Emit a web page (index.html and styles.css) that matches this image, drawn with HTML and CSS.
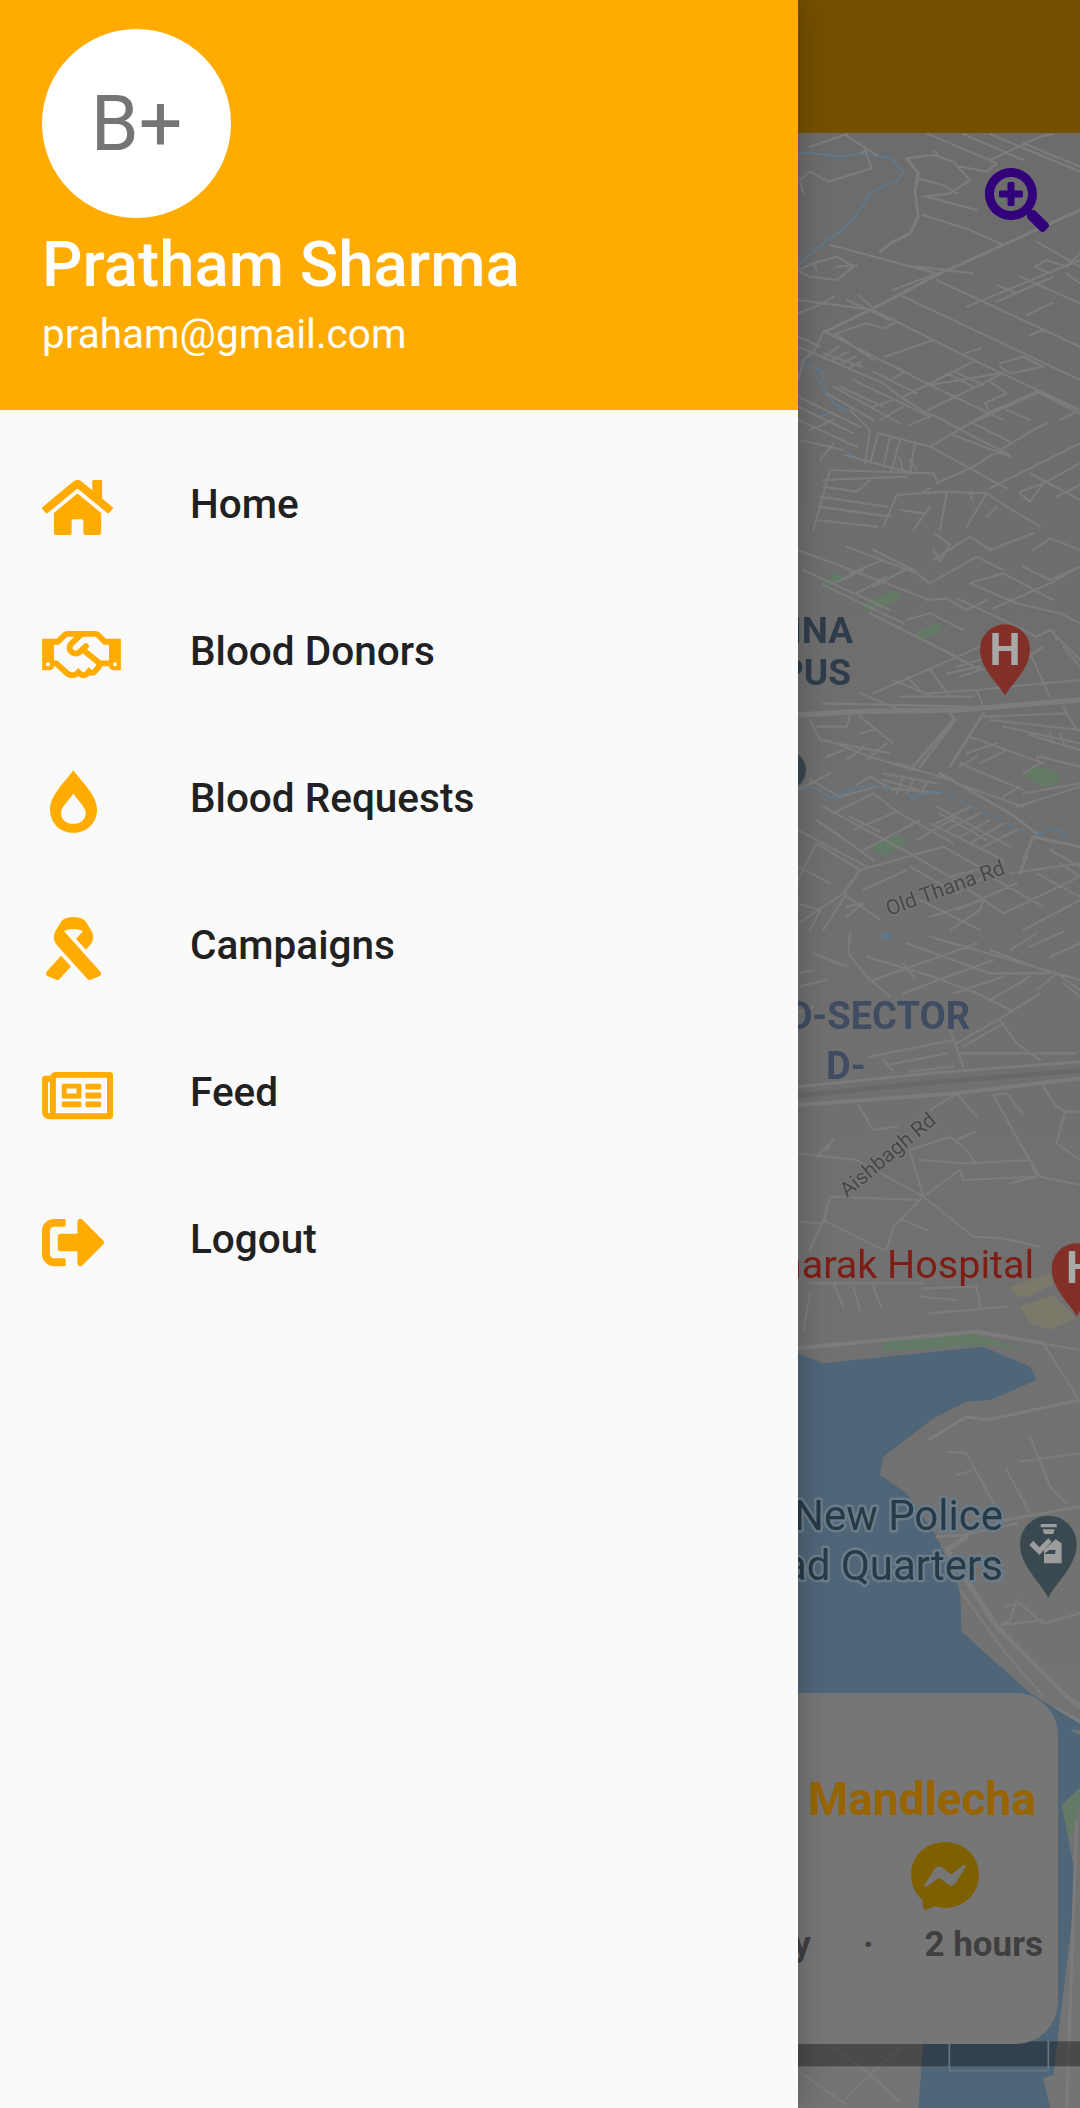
FILE: index.html
```html
<!DOCTYPE html>
<html lang="en">
<head>
<meta charset="utf-8">
<title>Blood Donors</title>
<link rel="stylesheet" href="styles.css">
</head>
<body>
<div class="screen">
  <main class="app">
    <div class="appbar"></div>
    <div class="map">
      <svg class="map-canvas" viewBox="0 133 1080 1975" aria-hidden="true">
        <!-- land under the lake and the lake -->
        <g transform="translate(790 1330) scale(.33333)">
          <path class="water" d="M24 70L100 100L580 50L720 110L740 150L600 210L530 215L430 265L280 380L270 435L350 490L440 620L510 780L515 905L720 1090L900 1200L24 1200Z"/>
          <path class="park" d="M275 30L540 10L710 60L590 45L280 65Z"/>
          <path class="road wide" d="M24 55L280 30L560 5L760 40"/>
          <path class="road mid" d="M415 330L530 260L590 270L870 210M620 575L870 530M440 620L520 615L680 580"/>
          <path class="road" d="M760 40L870 215M760 40L870 60M470 365L530 370L610 520M500 435L550 420M650 420L720 550M720 320L780 470L830 520M690 395L870 370M650 830L690 820L760 880L870 850M680 810L660 870L630 885L760 870"/>
          <path class="road xwide" d="M470 660L530 620M470 660L620 890L830 1100L870 1130"/>
          <path class="road" d="M510 780L640 960L760 1100"/>
        </g>
        <g transform="translate(790 1708) scale(.33333)">
          <path class="water" d="M800 50L870 80L870 240L815 290L860 520L790 1100L760 1110L780 1200L385 1200L400 1000L24 1000L24 0L800 0Z"/>
          <path class="park" d="M815 290L870 240L870 262L850 380L835 380Z"/>
          <path class="road mid" d="M860 340L830 1200M800 0L870 40"/>
          <path class="road" d="M25 1090L170 1190M120 1010L240 1100L340 1010M240 1100L330 1180M240 1100L170 1170"/>
          <rect class="band" x="24" y="1000" width="850" height="75"/>
          <path class="box" d="M478 1000V1088H775V1000"/>
        </g>
        <!-- north -->
        <g transform="translate(790 130) scale(.33333)">
          <path class="river" d="M24 70L60 68L150 80L215 70L305 85L340 125L325 150L235 190L230 215L165 295L100 340L24 405M45 705L90 720L105 735L90 755L110 790L130 820L170 840M85 860L120 850M100 880L130 870M170 965L210 990"/>
          <path class="park" d="M620 205L645 205L640 218L620 215Z"/>
          <path class="road" d="M60 50L170 12M170 18L260 75M225 60L245 115L115 155L60 125L30 150L40 190M215 70L225 60M350 85L430 75L490 95L540 150L480 190L400 200M380 145L460 165L500 190M430 60L445 75M410 10L620 100M520 12L700 90M600 12L870 125M700 40L870 110M600 90L750 20L790 12M510 110L590 125L620 100M410 200L560 240M400 255L540 300L640 345M120 345L440 430M25 420L70 400L140 380L190 410L140 450L60 440L30 425M70 400L80 420M140 410L200 405M380 410L550 430M310 480L440 430M330 495L870 750M440 450L870 650M250 540L550 690L870 840M105 605L420 765L640 870M740 335L870 410M735 410L770 390L830 410L870 370M735 410L780 430M830 430L870 460M690 440L870 520M620 465L680 490M530 530L870 390M620 515L790 440M710 555L785 520M720 615L760 600M170 510L300 570M205 495L250 535M25 510L100 520L130 500M25 550L100 520M100 520L250 540M135 610L250 690M140 610L230 580L280 595L320 575M285 680L430 630M525 670L575 655M450 745L560 690M420 765L630 730M470 730L550 770M495 725L580 765M630 700L700 680L760 710L660 730L630 710M25 620L90 650M25 650L280 760L330 800L420 855M100 605L75 660L40 690L25 750M100 670L215 710M105 680L145 650M130 690L175 665M155 700L195 680M180 710L215 695M250 725L380 790M305 705L345 725L310 745M340 800L450 745M415 840L640 730M585 820L600 845L740 785L870 850M585 820L650 790L600 755M600 845L540 880M360 885L430 855M430 855L570 930L660 975M420 950L540 880L750 785M650 840L720 870M730 900L770 880M810 870L870 840M540 875L660 935M130 770L330 880M150 770L280 830M190 750L420 860M110 790L250 870M250 830L310 810M270 870L340 830M180 840L240 900L225 1000M25 800L210 890M25 830L190 910M25 870L200 950M60 900L130 870M30 930L160 960M130 940L90 990M265 910L240 1000M300 920L280 1010M330 930L305 1020M375 935L360 1030M265 910L420 950M165 975L370 1030M330 985L340 1030M360 990L380 1020M420 950L540 1015L650 1075M540 1015L440 1060M540 1015L730 900M490 915L660 980M600 1075L830 960L870 940M720 1030L870 1110M690 1085L760 1060L720 1115L690 1090M760 1060L870 1000M800 1100L870 1065M120 1020L430 1030M430 1030L440 1050M120 1020L70 1200M100 1050L350 1040M100 1070L200 1085L240 1050M90 1100L290 1130M85 1130L300 1160M80 1170L260 1190M280 1190L320 1095L470 1085M330 1140L400 1150M400 1085L420 1075M470 1090L450 1200M370 1200L420 1130M470 1085L590 1090L650 1130L750 1190M590 1090L530 1190M540 1090L550 1115M590 1160L620 1130"/>
          <path class="road mid" d="M350 85L385 130L375 180L385 260L360 310L310 335L270 365M105 605L250 535L450 430L640 345L760 290L870 240"/>
        </g>
        <!-- middle with the hospital pin -->
        <g transform="translate(790 530) scale(.33333)">
          <path class="park" d="M95 155L150 130L168 145L110 170ZM212 228L310 180L338 200L240 248ZM365 315L440 278L465 295L392 332ZM232 950L315 910L355 935L280 980ZM700 738L740 708L805 725L805 760L765 772Z"/>
          <path class="road" d="M25 60L130 100L420 210M100 165L340 280M40 120L300 240M170 50L380 130L420 160M250 60L380 125M280 90L180 130M220 120L130 160M290 140L200 190M345 120L250 170M430 90L540 20L600 60L730 10M420 160L560 80L640 120M430 60L450 95L480 45L435 10M540 160L680 220L810 250L870 280M540 160L640 130L790 210M610 235L780 160L870 110M730 60L780 25L870 60M700 110L780 150L870 110M500 205L640 270L740 320M410 210L470 205L530 240L590 210M350 270L420 250L520 300M240 250L500 380M400 330L570 420M250 490L480 390L570 350M210 490L330 540M310 450L430 500M420 420L480 500M350 440L390 480M470 430L570 410M500 410L600 380M510 440L600 410M410 490L560 480L760 460L870 450M560 480L580 530M330 500L550 500M100 520L540 530M740 320L780 300L870 390M790 300L800 330M720 370L780 500M820 350L870 410M760 350L700 390M820 530L860 600M580 560L830 550M600 570L870 600M640 590L870 640M780 610L790 640M810 610L820 640M720 615L870 660M60 570L90 630L300 670M80 590L170 590L180 560M210 560L310 640M250 600L210 610M110 630L240 680L370 720M160 660L110 680M220 650L170 690M290 640L230 690M320 700L480 750M540 620L760 700M620 640L530 670M510 700L700 780M560 680L510 710M650 660L570 700M740 680L750 700L700 730M750 680L870 710M500 760L700 830M640 800L690 770M700 790L870 760M680 830L870 770M24 780L120 730M60 750L150 800L260 770L450 790M200 765L240 740L310 780M280 730L440 760M280 750L420 790M340 740L320 790M370 750L350 790M410 760L390 790M100 830L340 960L480 1040L640 1150M80 870L250 990M24 900L230 1010M190 900L320 845L490 940M130 850L250 790L320 845M180 860L270 905M220 960L390 870M380 930L500 860M440 830L660 950M420 880L640 990M450 850L590 930M540 830L440 880M570 850L470 900M600 870L510 920M640 880L540 940M680 900L580 950M24 1050L80 940L210 1020L160 1090L24 1180M24 1010L120 1060M160 1090L270 1170M210 1020L460 950L600 1030L500 1090L360 1010M350 1020L220 1080M390 1110L570 1200M480 1040L640 1000M660 1030L870 1000M600 1040L760 1130M740 1030L870 1100M780 960L870 1010M810 1000L870 1040M500 1140L680 1060M640 1150L870 1040M700 1200L870 1110M20 1120L90 1140L60 1200M100 1200L170 1090M170 1130L220 1120L170 1160M420 1160L580 1110L570 1140L480 1200"/>
          <path class="road mid" d="M480 550L495 570L390 710M580 550L480 710M490 570L360 720M450 730L660 850L740 910M700 990L730 920L870 950M690 1030L710 980"/>
          <path class="road xwide" d="M24 555L200 545L500 540L870 510"/>
          <path class="river" d="M24 772L80 775L125 805L190 775L240 765L300 775M360 800L455 785"/>
          <path class="river dashed" d="M480 795L720 915"/>
          <path class="river" d="M740 915L790 895L830 915"/>
          <path class="pin-red" d="M645 497C630 465 570 420 570 358A75 75 0 0 1 720 358C720 420 660 465 645 497Z"/>
          <circle class="pin-dark" cx="-10" cy="720" r="58"/>
        </g>
        <!-- south of the rail line -->
        <g transform="translate(790 930) scale(.33333)">
          <path class="sand" d="M660 1070L780 1030L790 1060L720 1100L680 1100ZM690 1130L790 1095L860 1165L780 1200L720 1180Z"/>
          <rect class="river-fill" x="276" y="8" width="24" height="18"/>
          <path class="road" d="M180 10L175 70L230 140L300 200M230 80L430 140L560 190L660 240M70 70L170 110M350 40L600 130L780 130M420 20L870 150M600 60L760 120M660 60L740 10M720 50L820 5M780 80L870 40M740 180L800 130L870 180M820 160L870 200M250 150L560 40M340 190L500 130L610 90M340 100L370 140M490 190L640 140M600 210L720 140M500 340L640 260L750 190M630 270L680 340L750 390M640 280L520 350M500 370L860 370M24 130L70 120M24 170L110 150M24 250L70 230M480 300L520 410M240 380L490 330M290 405L470 370M360 425L490 410M280 390L310 425M420 540L500 490L560 560M205 525L250 600L320 590M610 495L690 640L750 740L870 765M610 495L650 490L700 555M800 530L825 545L800 640L870 690M825 545L870 545M760 470L800 530M360 665L400 800M360 660L480 620L530 660L555 700M500 630L555 605M390 690L530 700L720 690M720 690L740 740L520 750L510 720M660 760L740 740M400 800L510 720M24 670L200 690L400 800L550 920M80 680L130 630L110 660M100 880L120 800L380 810M60 960L100 870L280 960M400 800L310 890L290 960M340 870L410 900M24 875L100 880M550 920L640 925L750 950M130 1060L160 1130M190 1070L210 1140M250 1070L275 1135M400 1075L560 1070L570 1130M390 1100L500 1110M420 1150L650 1130M40 1200L60 1090M60 1060L400 1060"/>
          <path class="road mid" d="M24 470L420 430L870 395"/>
          <path class="rail" d="M24 497L450 455L870 422"/>
          <path class="road wide" d="M24 525L500 490L870 445"/>
          <path class="pin-red" d="M860 1160C845 1125 785 1080 785 1015A75 75 0 0 1 935 1015C935 1080 875 1125 860 1160Z"/>
        </g>
        <g transform="translate(790 1330) scale(.33333)">
          <path class="pin-dark" d="M775 805C760 765 690 710 690 642A85 85 0 0 1 860 642C860 710 790 765 775 805Z"/>
          <path class="pin-figure" d="M752 582H800V592H752ZM758 598H794L790 612H762ZM797 628L815 640V700H762V672H795L797 660H778L762 672V660ZM718 645L730 632L748 652L775 625L785 635L748 675Z"/>
        </g>
        <text class="label district" x="853" y="643" text-anchor="end">INA</text>
        <text class="label district" x="851" y="685" text-anchor="end">PUS</text>
        <text class="label sector" x="970" y="1029" text-anchor="end">D-SECTOR</text>
        <text class="label sector" x="826" y="1079">D-</text>
        <text class="label pin-letter" x="1005" y="665" text-anchor="middle">H</text>
        <text class="label pin-letter" x="1066" y="1283">H</text>
        <text class="label street" transform="translate(889 916) rotate(-20)">Old Thana Rd</text>
        <text class="label street" transform="translate(847 1198) rotate(-40)">Aishbagh Rd</text>
        <text class="label hospital" x="1034" y="1278" text-anchor="end">Smarak Hospital</text>
        <text class="label police" x="1003" y="1530" text-anchor="end">New Police</text>
        <text class="label police" x="1003" y="1580" text-anchor="end">Head Quarters</text>
      </svg>

      <svg class="zoom-button" viewBox="0 0 512 512" aria-hidden="true"><path d="M304 192v32c0 6.6-5.4 12-12 12h-56v56c0 6.6-5.4 12-12 12h-32c-6.6 0-12-5.4-12-12v-56h-56c-6.6 0-12-5.4-12-12v-32c0-6.6 5.4-12 12-12h56v-56c0-6.6 5.4-12 12-12h32c6.6 0 12 5.4 12 12v56h56c6.6 0 12 5.4 12 12zm201 284.7L476.7 505c-9.4 9.4-24.6 9.4-33.9 0L343 405.3c-4.5-4.5-7-10.6-7-17V372c-35.3 27.6-79.7 44-128 44C93.1 416 0 322.9 0 208S93.1 0 208 0s208 93.1 208 208c0 48.3-16.4 92.7-44 128h16.3c6.4 0 12.5 2.5 17 7l99.7 99.7c9.3 9.4 9.3 24.6 0 34zM344 208c0-75.2-60.8-136-136-136S72 132.8 72 208s60.8 136 136 136 136-60.8 136-136z"/></svg>

      <section class="donor-card">
        <h2 class="donor-name">Mandlecha</h2>
        <svg class="messenger" viewBox="0 0 512 512" aria-hidden="true"><path d="M256.55 8C116.52 8 8 110.34 8 248.57c0 72.3 29.71 134.78 78.07 177.94 8.35 7.51 6.63 11.86 8.05 58.23A19.92 19.92 0 0 0 122 502.31c52.91-23.3 53.59-25.14 62.56-22.7C337.85 521.8 504 423.7 504 248.57 504 110.34 396.59 8 256.55 8zm149.24 185.13l-73 115.57a37.37 37.37 0 0 1-53.91 9.93l-58.08-43.47a15 15 0 0 0-18 0l-78.37 59.44c-10.46 7.93-24.16-4.6-17.11-15.67l73-115.57a37.36 37.36 0 0 1 53.91-9.93l58.06 43.46a15 15 0 0 0 18 0l78.41-59.38c10.44-7.98 24.14 4.54 17.09 15.62z"/></svg>
        <div class="donor-meta">
          <span>y</span>
          <span class="meta-dot">·</span>
          <span>2 hours</span>
        </div>
      </section>
    </div>
  </main>

  <aside class="drawer">
    <header class="drawer-header">
      <div class="avatar">B+</div>
      <div class="user-name">Pratham Sharma</div>
      <div class="user-email">praham@gmail.com</div>
    </header>
    <nav class="menu">
      <a class="menu-row">
        <span class="icon-slot"><svg class="icon icon-home" viewBox="0 0 576 512"><path d="M280.37 148.26L96 300.11V464a16 16 0 0 0 16 16l112.06-.29a16 16 0 0 0 15.92-16V368a16 16 0 0 1 16-16h64a16 16 0 0 1 16 16v95.64a16 16 0 0 0 16 16.05L464 480a16 16 0 0 0 16-16V300L295.67 148.26a12.19 12.19 0 0 0-15.3 0zM571.6 251.47L488 182.56V44.05a12 12 0 0 0-12-12h-56a12 12 0 0 0-12 12v72.61L318.47 43a48 48 0 0 0-61 0L4.34 251.47a12 12 0 0 0-1.6 16.9l25.5 31A12 12 0 0 0 45.15 301l235.22-193.74a12.19 12.19 0 0 1 15.3 0L530.9 301a12 12 0 0 0 16.9-1.6l25.5-31a12 12 0 0 0-1.7-16.93z"/></svg></span>
        <span class="menu-label">Home</span>
      </a>
      <a class="menu-row">
        <span class="icon-slot"><svg class="icon icon-hands" viewBox="0 0 640 512"><path d="M519.2 127.9l-47.6-47.6A56.252 56.252 0 0 0 432 64H205.2c-14.8 0-29.1 5.9-39.6 16.3L118 127.9H0v255.7h64c17.6 0 31.8-14.2 31.9-31.7h9.1l84.6 76.4c30.9 25.1 73.8 25.7 105.6 3.8 12.5 10.8 26 15.9 41.1 15.9 18.2 0 35.3-7.4 48.8-24 22.1 8.7 48.2 2.6 64-16.8l26.2-32.3c5.6-6.9 9.1-14.8 10.9-23h57.9c.1 17.5 14.4 31.7 31.9 31.7h64V127.9H519.2zM48 351.6c-8.8 0-16-7.2-16-16s7.2-16 16-16 16 7.2 16 16c0 8.9-7.2 16-16 16zm390-6.9l-26.1 32.2c-2.8 3.4-7.8 4-11.3 1.2l-23.9-19.4-30 36.5c-6 7.3-15 4.8-18 2.4l-36.8-31.5-15.6 19.2c-13.9 17.1-39.2 19.7-55.3 6.6l-97.3-88H96V175.8h41.9l61.7-61.6c2-.8 3.7-1.5 5.7-2.3H262l-38.7 35.5c-29.4 26.9-31.1 72.3-4.4 101.3 14.8 16.2 61.2 41.2 101.5 4.4l8.2-7.5 108.2 87.8c3.4 2.8 3.9 7.9 1.2 11.3zm106-40.8h-69.2c-2.3-2.8-4.9-5.4-7.7-7.7l-102.7-83.4 12.5-11.4c6.5-6 7-16.1 1-22.6L367 167.1c-6-6.5-16.1-6.9-22.6-1l-55.2 50.6c-9.5 8.7-25.7 9.4-34.6 0-9.3-9.9-8.5-25.1 1.2-33.9l65.6-60.1c7.4-6.8 17-10.5 27-10.5l83.7-.2c2.1 0 4.1.8 5.5 2.3l61.7 61.6H544v128zm48 47.7c-8.8 0-16-7.2-16-16s7.2-16 16-16 16 7.2 16 16c0 8.9-7.2 16-16 16z"/></svg></span>
        <span class="menu-label">Blood Donors</span>
      </a>
      <a class="menu-row">
        <span class="icon-slot"><svg class="icon icon-drop" viewBox="0 0 47.3 63"><path fill-rule="evenodd" d="M23.5 0C32 12 47.3 25 47.3 39.5 47.3 53 37 63 23.5 63 10 63 0 53 0 39.5 0 25 15 12 23.5 0ZM23.5 23.5C19 31 11 37 11 43 11 49.5 16.5 54 23.5 54 30.5 54 36 49.5 36 43 36 37 28 31 23.5 23.5Z"/></svg></span>
        <span class="menu-label">Blood Requests</span>
      </a>
      <a class="menu-row">
        <span class="icon-slot"><svg class="icon icon-ribbon" viewBox="0 0 448 512"><path d="M6.1 444.3c-9.6 10.8-7.5 27.6 4.5 35.7l68.8 27.9c9.9 6.7 23.3 5 31.3-3.8l91.8-101.9-79.2-87.9-117.2 130zm435.8 0s-292-324.6-295.4-330.1c15.4-8.4 40.2-17.9 77.5-17.9s62.1 9.5 77.5 17.9c-3.3 5.6-56 64.6-56 64.6l79.1 87.7 34.2-38c28.7-31.9 33.3-78.6 11.4-115.5l-43.7-73.5c-4.3-7.2-9.9-13.3-16.8-18-40.7-27.6-127.4-29.7-171.4 0-6.9 4.7-12.5 10.8-16.8 18l-43.6 73.2c-1.5 2.5-37.1 62.2 11.5 116L337.5 504c8 8.9 21.4 10.5 31.3 3.8l68.8-27.9c11.9-8 14-24.8 4.3-35.6z"/></svg></span>
        <span class="menu-label">Campaigns</span>
      </a>
      <a class="menu-row">
        <span class="icon-slot"><svg class="icon icon-news" viewBox="0 0 576 512"><path d="M552 64H112c-20.858 0-38.643 13.377-45.248 32H24c-13.255 0-24 10.745-24 24v272c0 30.928 25.072 56 56 56h496c13.255 0 24-10.745 24-24V88c0-13.255-10.745-24-24-24zM48 392V144h16v248c0 4.411-3.589 8-8 8s-8-3.589-8-8zm480 8H111.422c.374-2.614.578-5.283.578-8V112h416v288zM172 280h136c6.627 0 12-5.373 12-12v-96c0-6.627-5.373-12-12-12H172c-6.627 0-12 5.373-12 12v96c0 6.627 5.373 12 12 12zm28-80h80v40h-80v-40zm-40 140v-24c0-6.627 5.373-12 12-12h136c6.627 0 12 5.373 12 12v24c0 6.627-5.373 12-12 12H172c-6.627 0-12-5.373-12-12zm192 0v-24c0-6.627 5.373-12 12-12h104c6.627 0 12 5.373 12 12v24c0 6.627-5.373 12-12 12H364c-6.627 0-12-5.373-12-12zm0-144v-24c0-6.627 5.373-12 12-12h104c6.627 0 12 5.373 12 12v24c0 6.627-5.373 12-12 12H364c-6.627 0-12-5.373-12-12zm0 72v-24c0-6.627 5.373-12 12-12h104c6.627 0 12 5.373 12 12v24c0 6.627-5.373 12-12 12H364c-6.627 0-12-5.373-12-12z"/></svg></span>
        <span class="menu-label">Feed</span>
      </a>
      <a class="menu-row">
        <span class="icon-slot"><svg class="icon icon-logout" viewBox="0 0 512 512"><path d="M497 273L329 441c-15 15-41 4.5-41-17v-96H152c-13.3 0-24-10.7-24-24v-96c0-13.3 10.7-24 24-24h136V88c0-21.4 25.9-32 41-17l168 168c9.3 9.4 9.3 24.6 0 34zM192 436v-40c0-6.6-5.4-12-12-12H96c-17.7 0-32-14.3-32-32V160c0-17.7 14.3-32 32-32h84c6.6 0 12-5.4 12-12V76c0-6.6-5.4-12-12-12H96c-53 0-96 43-96 96v192c0 53 43 96 96 96h84c6.6 0 12-5.4 12-12z"/></svg></span>
        <span class="menu-label">Logout</span>
      </a>
    </nav>
  </aside>
</div>
</body>
</html>
```
FILE: styles.css
```css
* { box-sizing: border-box; }

html, body { margin: 0; padding: 0; }

body {
  width: 1080px;
  height: 2108px;
  overflow: hidden;
  font-family: Roboto, "Liberation Sans", sans-serif;
}

.screen {
  position: relative;
  width: 1080px;
  height: 2108px;
  overflow: hidden;
}

/* The app behind the open drawer, in its dimmed colours */
.app {
  display: flex;
  flex-direction: column;
  height: 100%;
}

.appbar {
  position: relative;
  z-index: 1;
  flex: none;
  height: 133px;
  background: #745000;
}

.map {
  position: relative;
  flex: 1;
  background: linear-gradient(#6c6c6c, #747474);
}

.map-canvas {
  display: block;
  width: 1080px;
  height: 1975px;
  filter: blur(.6px);
}

.road, .river, .rail, .box {
  fill: none;
  stroke-linecap: round;
  stroke-linejoin: round;
}

.road { stroke: #7c7c7c; stroke-width: 6.5; }
.road.mid { stroke-width: 9; }
.road.wide { stroke-width: 12; }
.road.xwide { stroke-width: 16; }
.rail { stroke: #686868; stroke-width: 14; }
.river { stroke: #5f7a8f; stroke-width: 5; }
.river.dashed { stroke-dasharray: 14 24; }
.river-fill { fill: #5f7a8f; }
.water { fill: #4f6679; }
.park { fill: #637b66; }
.sand { fill: #7c786a; }
.band { fill: rgba(0, 0, 0, .36); }
.box { stroke: #69757e; stroke-width: 5; }
.pin-red { fill: #822f27; }
.pin-dark { fill: #3a484f; }
.pin-figure { fill: #9c9c9c; }

.label {
  font-family: Roboto, "Liberation Sans", sans-serif;
  paint-order: stroke;
  stroke-linejoin: round;
}

.district {
  font-size: 37px;
  font-weight: 700;
  fill: #2f3c4a;
}

.sector {
  font-size: 38px;
  font-weight: 700;
  fill: #3f4c61;
}

.pin-letter {
  font-size: 44px;
  font-weight: 700;
  fill: #a8a8a8;
}

.street {
  font-size: 21px;
  fill: #484848;
  stroke: #767676;
  stroke-width: 3px;
}

.hospital {
  font-size: 39.5px;
  fill: #7f1c14;
}

.police {
  font-size: 42px;
  fill: #273a47;
  stroke: #6a7c89;
  stroke-width: 5px;
}

.zoom-button {
  position: absolute;
  top: 35px;
  left: 985px;
  width: 64px;
  height: 64px;
  fill: #33007c;
}

/* Donor card floating over the map */
.donor-card {
  position: absolute;
  top: 1560px;
  left: 22px;
  width: 1036px;
  height: 351px;
  padding: 79px 15px 0 0;
  display: flex;
  flex-direction: column;
  align-items: flex-end;
  border-radius: 42px;
  background: #767676;
}

.donor-name {
  margin: 0 7px 0 0;
  font-size: 46px;
  line-height: 54px;
  font-weight: 700;
  color: #976400;
}

.messenger {
  align-self: flex-start;
  margin: 15px 0 0 888px;
  width: 70px;
  height: 70px;
  fill: #7f6000;
}

.donor-meta {
  display: flex;
  align-items: baseline;
  margin-top: 13px;
  font-size: 35px;
  line-height: 42px;
  font-weight: 700;
  color: #3f3f3f;
}

.meta-dot {
  margin: 0 51px 0 52px;
}

/* Drawer */
.drawer {
  position: absolute;
  z-index: 2;
  top: 0;
  left: 0;
  bottom: 0;
  width: 798px;
  display: flex;
  flex-direction: column;
  background: #fafafa;
  box-shadow: 0 0 30px rgba(0, 0, 0, .25);
}

.drawer-header {
  flex: none;
  height: 410px;
  padding: 29px 0 0 42px;
  background: #ffab00;
  color: #fff;
}

.avatar {
  width: 189px;
  height: 189px;
  display: flex;
  align-items: center;
  justify-content: center;
  border-radius: 50%;
  background: #fff;
  color: #757575;
  font-size: 77px;
}

.user-name {
  margin-top: 11px;
  font-size: 63.5px;
  line-height: 72px;
  font-weight: 500;
}

.user-email {
  margin-top: 10px;
  font-size: 40.5px;
  line-height: 46px;
}

.menu {
  flex: 1;
  padding: 24px 0 0 42px;
}

.menu-row {
  height: 147px;
  display: flex;
  align-items: center;
  color: #212121;
}

.icon-slot {
  flex: none;
  width: 148px;
  display: flex;
  align-items: center;
}

.icon {
  display: block;
  height: 63px;
  fill: #ffab00;
}

.icon-home, .icon-news { width: 71px; }
.icon-hands { width: 79px; }
.icon-drop { width: 47px; margin-left: 8px; }
.icon-ribbon { width: 55px; margin-left: 4px; }
.icon-logout { width: 63px; }

.menu-label {
  padding-bottom: 8px;
  font-size: 40.5px;
  line-height: 46px;
  font-weight: 500;
}
```
